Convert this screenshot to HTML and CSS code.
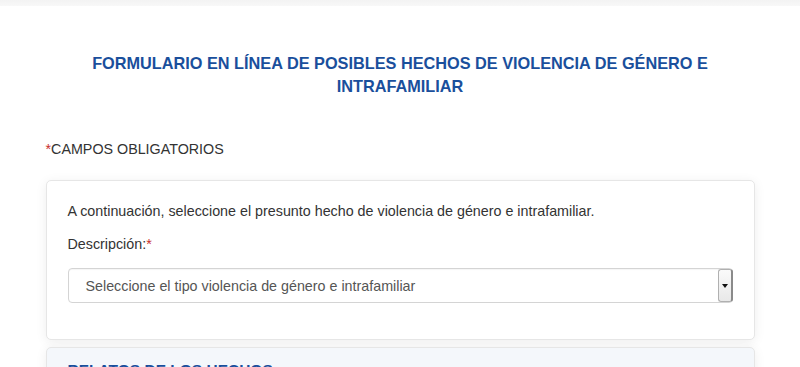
FILE: index.html
```html
<!DOCTYPE html>
<html>
<head>
    <title>Formulario en línea</title>
    <link rel="stylesheet" href="styles.css">
</head>
<body>
    <div class="topbar"></div>
    <div class="page">
        <h1 class="title">FORMULARIO EN LÍNEA DE POSIBLES HECHOS DE VIOLENCIA DE GÉNERO E INTRAFAMILIAR</h1>
        <p class="required"><span class="star">*</span>CAMPOS OBLIGATORIOS</p>

        <div class="card">
            <p class="intro">A continuación, seleccione el presunto hecho de violencia de género e intrafamiliar.</p>
            <label class="label">Descripción:<span class="star">*</span></label>
            <div class="select">
                <span class="select-text">Seleccione el tipo violencia de género e intrafamiliar</span>
                <span class="select-btn"><span class="caret"></span></span>
            </div>
        </div>

        <div class="card card-alt">
            <h2 class="section-title">RELATOS DE LOS HECHOS</h2>
        </div>
    </div>
</body>
</html>
```

FILE: styles.css
```css
* {
    margin: 0;
    padding: 0;
    box-sizing: border-box;
    font-family: 'Liberation Sans', Arial, sans-serif;
}

body {
    background: #fff;
    color: #333;
    overflow: hidden;
}

.topbar {
    height: 6px;
    background: linear-gradient(#f3f3f3, #f8f8f8);
}

.page {
    width: 709px;
    margin: 0 auto;
    padding-top: 46px;
}

.title {
    color: #1a4f9c;
    font-size: 16.3px;
    font-weight: bold;
    line-height: 23px;
    text-align: center;
    padding: 0 30px;
}

.required {
    font-size: 14.3px;
    margin-top: 43px;
    line-height: 17px;
}

.star {
    color: #c9302c;
}

.card {
    margin-top: 22px;
    background: #fff;
    border: 1px solid #e6e6e6;
    border-radius: 5px;
    box-shadow: 0 2px 12px rgba(0, 0, 0, 0.07);
    padding: 22px 21px 36px;
}

.intro {
    font-size: 14.3px;
    line-height: 17px;
}

.label {
    display: block;
    font-size: 14.3px;
    line-height: 17px;
    margin-top: 16px;
}

.select {
    margin-top: 15px;
    height: 35px;
    border: 1px solid #d4d4d4;
    border-radius: 4px;
    display: flex;
    align-items: center;
    padding-left: 17px;
    box-shadow: inset 0 1px 1px rgba(0, 0, 0, 0.04);
}

.select-text {
    flex: 1;
    font-size: 14.3px;
    color: #555;
}

.select-btn {
    width: 15px;
    height: 33px;
    margin-right: -1px;
    border: 1px solid #b0b0b0;
    border-right: 2px solid #8a8a8a;
    border-radius: 3px;
    background: linear-gradient(#fafafa, #e8e8e8);
    display: flex;
    align-items: center;
    justify-content: center;
}

.caret {
    width: 0;
    height: 0;
    border-left: 3px solid transparent;
    border-right: 3px solid transparent;
    border-top: 4px solid #111;
}

.card-alt {
    margin-top: 7px;
    background: #f4f7fb;
    padding: 12px 21px;
}

.section-title {
    color: #1a4f9c;
    font-size: 15.5px;
    line-height: 19px;
    font-weight: bold;
}
```
